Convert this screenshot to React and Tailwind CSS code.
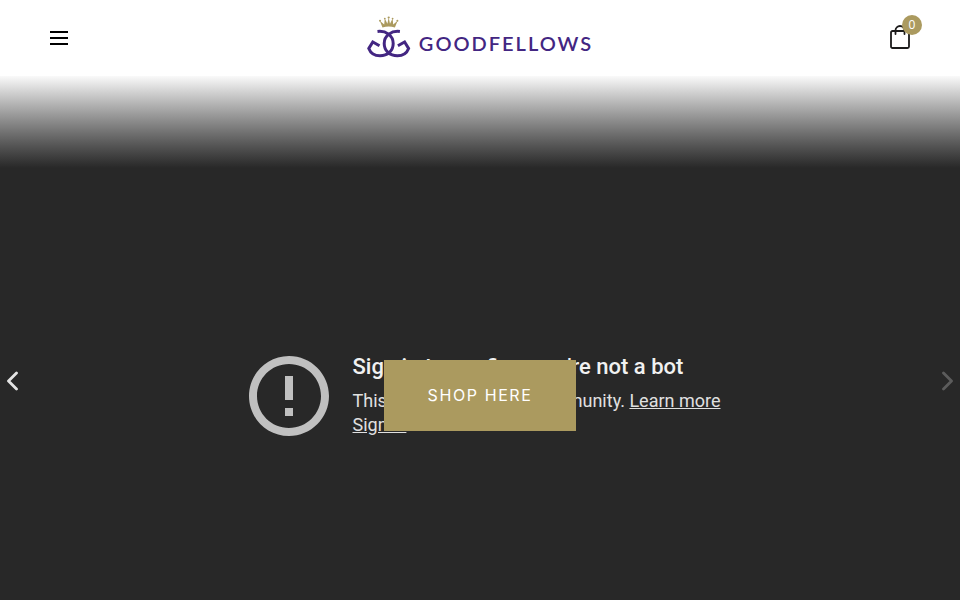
const iconStroke = {
  fill: "none",
  stroke: "currentColor",
  strokeLinecap: "round",
  strokeLinejoin: "round",
};

function LogoMark() {
  return (
    <svg viewBox="0 0 44 42" className="w-11 h-[42px]" aria-hidden="true">
      {/* Crown */}
      <g fill="#ab9a5f">
        <path d="M15.500 11.500 12.800 4.800l4.400 3.800 0.600-6 2.600 5.200L21.700 1.500l1.300 6.300 2.600-5.200 0.600 6 4.400-3.800-2.700 6.700q-6.200-1.800-12.400 0z" />
        <circle cx="13" cy="4.800" r="1" />
        <circle cx="17.800" cy="2.600" r="0.900" />
        <circle cx="21.700" cy="1.500" r="1.100" />
        <circle cx="25.600" cy="2.600" r="0.900" />
        <circle cx="30.400" cy="4.800" r="1" />
      </g>
      {/* Mirrored pair of Gs */}
      <g fill="none" stroke="#432682" strokeWidth="3" strokeLinejoin="miter">
        <path d="M10.500 15.500C19 14.500 26.200 19.500 26.200 27.500C26.200 35 20.500 39.800 13 39.800C7 39.800 3.500 37 1.800 32.500L5.800 26L12.500 29.800" />
        <path d="M32.900 15.500C24.400 14.500 17.200 19.500 17.200 27.500C17.200 35 22.900 39.800 30.400 39.800C36.400 39.800 39.900 37 41.600 32.500L37.600 26L30.900 29.800" />
      </g>
    </svg>
  );
}

function Header() {
  return (
    <header className="h-[76px] bg-white px-12 flex items-center justify-between">
      <button type="button" aria-label="Open menu" className="w-12 h-6 px-0.5 flex items-center text-black">
        <svg viewBox="0 0 18 14" className="w-[18px] h-3.5" fill="currentColor" aria-hidden="true">
          <path d="M0 0h18v2H0zM0 6h18v2H0zM0 12h18v2H0z" />
        </svg>
      </button>

      <a href="/" className="pb-0.5 flex items-center gap-2">
        <LogoMark />
        <span className="pt-3 font-['Lato',sans-serif] text-xl leading-6 font-semibold tracking-widest text-[#432682]">
          GOODFELLOWS
        </span>
      </a>

      <a href="/cart" aria-label="Cart" className="relative w-12 pb-0.5 flex justify-end text-[#1c1b1b]">
        <svg viewBox="0 0 20 24" className="w-5 h-6 mr-0.5" strokeWidth="1.800" {...iconStroke} aria-hidden="true">
          <rect x="1" y="6" width="18" height="17" rx="1.500" />
          <path d="M5.500 9V5.500a4.500 4.500 0 0 1 9 0V9" />
        </svg>
        <span className="absolute -top-2.5 -right-2.5 w-5 h-5 rounded-full bg-[#ab9a5f] text-white text-xs leading-5 text-center font-['Open_Sans',sans-serif]">
          0
        </span>
      </a>
    </header>
  );
}

function VideoError() {
  return (
    <div className="flex items-start gap-4 font-['Roboto',sans-serif]">
      <svg viewBox="0 0 24 24" className="w-24 h-24 shrink-0" fill="#c0c0c0" aria-hidden="true">
        <path d="M11 15h2v2h-2zm0-8h2v6h-2zm.99-5C6.470 2 2 6.480 2 12s4.470 10 9.990 10C17.520 22 22 17.520 22 12S17.520 2 11.990 2zM12 20c-4.420 0-8-3.580-8-8s3.580-8 8-8 8 3.580 8 8-3.580 8-8 8z" />
      </svg>
      <div className="pt-[5px]">
        <h2 className="mb-2 text-[22px] leading-7 font-medium text-[#f1f1f1]">Sign in to confirm you’re not a bot</h2>
        <p className="text-lg leading-6 text-[#e0e0e0]">
          This helps protect our community.{" "}
          <a href="/learn-more" className="underline">Learn more</a>
          <br />
          <a href="/sign-in" className="underline">Sign in</a>
        </p>
      </div>
    </div>
  );
}

function Hero() {
  return (
    <section className="relative flex-1 flex items-center justify-center pt-[116px] pl-px bg-[#282828]">
      <div className="absolute inset-x-0 top-0 h-[92px] bg-linear-to-b from-[#fafafa] to-[#282828]" />

      <VideoError />

      {/* Call to action sits over the video */}
      <div className="absolute inset-0 pt-[114px] flex items-center justify-center">
        <a
          href="/shop"
          className="w-48 h-[71px] flex items-center justify-center bg-[#ab9a5f] text-white font-['Inter',sans-serif] text-base tracking-widest"
        >
          SHOP HERE
        </a>
      </div>

      <div className="absolute inset-0 pt-[86px] px-1.5 flex items-center justify-between pointer-events-none">
        <button type="button" aria-label="Previous slide" className="pointer-events-auto text-[#e4e4e4]">
          <svg viewBox="0 0 12 20" className="w-3 h-5" strokeWidth="2.800" {...iconStroke} aria-hidden="true">
            <path d="M10.500 2 2.500 10l8 8" />
          </svg>
        </button>
        <button type="button" aria-label="Next slide" className="pointer-events-auto text-[#5c5c5c]">
          <svg viewBox="0 0 12 20" className="w-3 h-5" strokeWidth="2.800" {...iconStroke} aria-hidden="true">
            <path d="m1.500 2 8 8-8 8" />
          </svg>
        </button>
      </div>
    </section>
  );
}

export default function App() {
  return (
    <div className="min-h-screen flex flex-col">
      <Header />
      <Hero />
    </div>
  );
}
